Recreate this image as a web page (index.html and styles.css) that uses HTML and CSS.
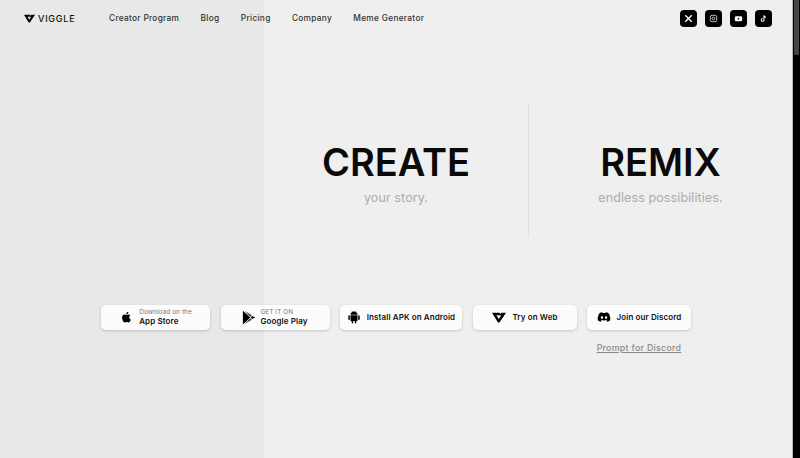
FILE: index.html
```html
<!DOCTYPE html>
<html lang="en">
<head>
    <meta charset="UTF-8">
    <meta name="viewport" content="width=device-width, initial-scale=1.0">
    <title>Viggle</title>
    <link rel="stylesheet" href="styles.css">
</head>
<body>
    <div class="page">
        <div class="shade"></div>
        <header class="topbar">
            <a class="logo" href="#">
                <svg class="logo-mark" viewBox="0 0 24 18"><path fill-rule="evenodd" d="M0 1h13.500v2.500L16 1h8L12.800 17.500h-2.600zM7.500 5l4.200 6.500L15 6.300V5z"/></svg>
                <span>VIGGLE</span>
            </a>
            <nav class="nav">
                <a href="#">Creator Program</a>
                <a href="#">Blog</a>
                <a href="#">Pricing</a>
                <a href="#">Company</a>
                <a href="#">Meme Generator</a>
            </nav>
            <div class="socials">
                <a class="social" href="#"><svg viewBox="0 0 24 24"><path d="M5 5l14 14M19 5L5 19" stroke="#fff" stroke-width="3" fill="none"/></svg></a>
                <a class="social" href="#"><svg viewBox="0 0 24 24"><rect x="5" y="5" width="14" height="14" rx="4" stroke="#ccc" stroke-width="2" fill="none"/><circle cx="12" cy="12" r="3" stroke="#ccc" stroke-width="2" fill="none"/></svg></a>
                <a class="social" href="#"><svg viewBox="0 0 24 24"><rect x="4" y="7" width="16" height="11" rx="3" fill="#fff"/><path d="M10.500 10v5l4-2.500z" fill="#000"/></svg></a>
                <a class="social" href="#"><svg viewBox="0 0 24 24"><path d="M13 5v10a3 3 0 1 1-3-3M13 5c.5 2.500 2 4 4 4" stroke="#fff" stroke-width="2.200" fill="none"/></svg></a>
            </div>
        </header>

        <section class="hero">
            <div class="hero-col">
                <h1>CREATE</h1>
                <p>your story.</p>
            </div>
            <div class="hero-col hero-right">
                <h1>REMIX</h1>
                <p>endless possibilities.</p>
            </div>
        </section>

        <section class="actions">
            <a class="btn btn-store" href="#">
                <svg class="icon" viewBox="0 0 24 24"><path d="M17.500 12.600c0-2.200 1.800-3.200 1.900-3.300-1-1.500-2.600-1.700-3.200-1.700-1.400-.1-2.700.8-3.400.8s-1.800-.8-3-.8c-1.500 0-3 .9-3.800 2.200-1.600 2.800-.4 7 1.200 9.300.8 1.100 1.700 2.400 2.900 2.300 1.200 0 1.600-.7 3-.7s1.800.7 3 .7 2-1.100 2.800-2.200c.9-1.300 1.200-2.500 1.300-2.600-.1 0-2.700-1-2.700-4zM15.200 5.900c.6-.8 1.100-1.900.9-3-.9 0-2.100.6-2.700 1.400-.6.700-1.100 1.800-1 2.800 1.100.1 2.100-.5 2.800-1.200z"/></svg>
                <span class="store-text"><small>Download on the</small><b>App Store</b></span>
            </a>
            <a class="btn btn-play" href="#">
                <svg class="icon icon-play" viewBox="0 0 24 24"><path d="M3 1l12 11L3 23z"/><path d="M6 1.500l11 7-2 2.200z" opacity=".8"/><path d="M17.500 9.500l5.500 2.500-5.500 2.500-1.500-2.500z"/><path d="M6 22.500l11-7-2-2.200z" opacity=".8"/></svg>
                <span class="store-text"><small>GET IT ON</small><b>Google Play</b></span>
            </a>
            <a class="btn btn-apk" href="#">
                <svg class="icon" viewBox="0 0 24 24"><path d="M6 9h12v9a1 1 0 0 1-1 1h-1v3a1.300 1.300 0 0 1-2.600 0v-3h-2.800v3a1.300 1.300 0 0 1-2.600 0v-3H7a1 1 0 0 1-1-1zM3.500 9A1.300 1.300 0 0 1 4.800 10.300v5.400a1.300 1.300 0 0 1-2.600 0v-5.400A1.300 1.300 0 0 1 3.500 9zM20.500 9a1.300 1.300 0 0 1 1.300 1.300v5.400a1.300 1.300 0 0 1-2.600 0v-5.400A1.300 1.300 0 0 1 20.500 9zM6 8c0-2.200 1.200-3.800 3-4.700L8 1.600l.5-.3 1.100 1.700a7 7 0 0 1 4.800 0l1.100-1.700.5.3-1 1.700c1.800.9 3 2.500 3 4.700z"/></svg>
                <b>Install APK on Android</b>
            </a>
            <a class="btn btn-web" href="#">
                <svg class="icon icon-v" viewBox="0 0 24 18"><path fill-rule="evenodd" d="M0 1h13.500v2.500L16 1h8L12.800 17.500h-2.600zM7.500 5l4.200 6.500L15 6.300V5z"/></svg>
                <b>Try on Web</b>
            </a>
            <div class="discord">
                <a class="btn btn-discord" href="#">
                    <svg class="icon" viewBox="0 0 24 24"><path d="M19.500 5.300A18 18 0 0 0 15.100 4l-.6 1.200a16 16 0 0 0-5 0L8.900 4a18 18 0 0 0-4.400 1.300C1.700 9.400 1 13.400 1.300 17.400A18 18 0 0 0 6.700 20l1.200-1.800-1.900-1 .5-.4a12.700 12.700 0 0 0 11 0l.5.4-1.900 1 1.200 1.800a18 18 0 0 0 5.400-2.600c.4-4.600-.7-8.600-3.200-12.100zM8.500 14.900c-1.100 0-2-1-2-2.200s.9-2.200 2-2.200 2 1 2 2.200-.9 2.200-2 2.200zm7 0c-1.100 0-2-1-2-2.200s.9-2.200 2-2.200 2 1 2 2.200-.9 2.200-2 2.200z"/></svg>
                    <b>Join our Discord</b>
                </a>
                <a class="prompt" href="#">Prompt for Discord</a>
            </div>
        </section>
        <div class="scrollbar"><div class="scroll-thumb"></div></div>
    </div>
</body>
</html>
```

FILE: styles.css
```css
* {
    box-sizing: border-box;
}
html, body {
    margin: 0;
    height: 100%;
    overflow: hidden;
}
body {
    font-family: Inter, "Liberation Sans", sans-serif;
    color: #111;
    background-color: #efefef;
}
a {
    color: inherit;
    text-decoration: none;
}
.page {
    position: relative;
    height: 458px;
    display: flex;
    flex-direction: column;
    padding-right: 8px;
}
.shade {
    position: absolute;
    left: 0;
    top: 0;
    bottom: 0;
    width: 264px;
    background-color: #e8e8e8;
}
.scrollbar {
    position: absolute;
    right: 0;
    top: 0;
    bottom: 0;
    width: 8px;
    background-color: #000;
    border-left: 1px solid #b8b8b8;
}
.scroll-thumb {
    height: 55px;
    margin: 0 1px;
    background-color: #454545;
}
.topbar, .hero, .actions {
    position: relative;
}
.topbar {
    height: 36px;
    display: flex;
    align-items: center;
    padding: 0 20px 0 24px;
}
.logo {
    display: flex;
    align-items: center;
    gap: 3px;
    width: 85px;
    font-size: 9px;
    font-weight: 500;
    letter-spacing: 0.75px;
}
.logo-mark {
    width: 11px;
    height: 9px;
}
.nav {
    display: flex;
    gap: 21.3px;
    font-size: 8.3px;
    font-weight: 500;
    letter-spacing: 0.3px;
    color: #333;
}
.socials {
    display: flex;
    gap: 8px;
    margin-left: auto;
}
.social {
    width: 17px;
    height: 17px;
    border-radius: 4px;
    background-color: #000;
    display: flex;
    align-items: center;
    justify-content: center;
}
.social svg {
    width: 11px;
    height: 11px;
}
.hero {
    display: flex;
    margin-top: 68px;
    height: 133px;
    padding-left: 264px;
}
.hero-col {
    width: 264px;
    text-align: center;
    padding-top: 36px;
}
.hero-right {
    border-left: 1px solid #e2e2e2;
}
.hero h1 {
    margin: 0;
    font-size: 38px;
    line-height: 44px;
    font-weight: 600;
    color: #0a0a0a;
}
.hero p {
    margin: 5px 0 0;
    font-size: 12.5px;
    line-height: 18px;
    letter-spacing: 0.1px;
    color: #acacac;
}
.actions {
    display: flex;
    align-items: flex-start;
    margin-top: 68px;
    padding-left: 101px;
}
.btn {
    height: 25px;
    padding-bottom: 1px;
    border-radius: 5px;
    background-color: #fcfcfc;
    box-shadow: 0 1px 3px rgba(0, 0, 0, 0.18);
    display: flex;
    align-items: center;
    justify-content: center;
    gap: 6px;
    font-size: 8px;
    letter-spacing: 0.1px;
}
.btn b {
    font-weight: 600;
}
.icon {
    width: 14px;
    height: 14px;
}
.icon-play {
    width: 15px;
    height: 15px;
}
.icon-v {
    width: 14px;
    height: 11px;
}
.store-text {
    display: flex;
    flex-direction: column;
    line-height: 10px;
}
.store-text small {
    font-size: 6.4px;
    line-height: 7px;
    color: #777;
}
.btn-store {
    width: 109px;
}
.btn-play {
    width: 109px;
    margin-left: 11px;
    padding-right: 2px;
    gap: 4px;
}
.btn-apk {
    width: 122px;
    margin-left: 10px;
}
.btn-web {
    width: 104px;
    margin-left: 11px;
}
.discord {
    margin-left: 10px;
    width: 104px;
    display: flex;
    flex-direction: column;
    align-items: center;
}
.btn-discord {
    width: 104px;
}
.prompt {
    margin-top: 12px;
    font-size: 8.8px;
    font-weight: 500;
    letter-spacing: 0.3px;
    color: #8a8a8a;
    text-decoration: underline;
}
```
